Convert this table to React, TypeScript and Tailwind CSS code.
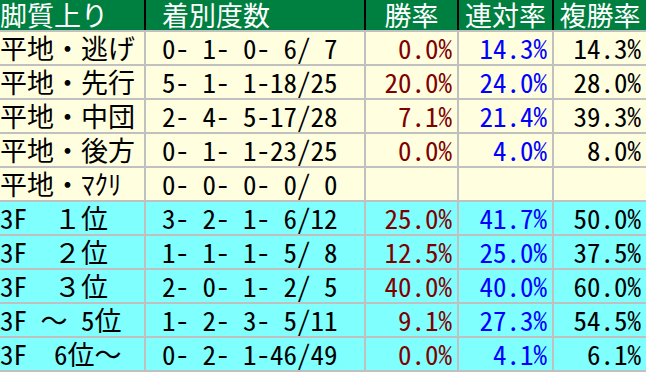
const font = {
  fontFamily: '"Noto Sans Mono CJK JP", "Noto Sans CJK JP", "Liberation Mono", monospace',
}

type Row = {
  label: string
  counts: string
  win: string
  rentai: string
  fukusho: string
  tone: "flat" | "f3"
}

const rows: Row[] = [
  { label: "平地・逃げ", counts: "0- 1- 0- 6/ 7", win: "0.0%", rentai: "14.3%", fukusho: "14.3%", tone: "flat" },
  { label: "平地・先行", counts: "5- 1- 1-18/25", win: "20.0%", rentai: "24.0%", fukusho: "28.0%", tone: "flat" },
  { label: "平地・中団", counts: "2- 4- 5-17/28", win: "7.1%", rentai: "21.4%", fukusho: "39.3%", tone: "flat" },
  { label: "平地・後方", counts: "0- 1- 1-23/25", win: "0.0%", rentai: "4.0%", fukusho: "8.0%", tone: "flat" },
  { label: "平地・ﾏｸﾘ", counts: "0- 0- 0- 0/ 0", win: "", rentai: "", fukusho: "", tone: "flat" },
  { label: "3F　１位", counts: "3- 2- 1- 6/12", win: "25.0%", rentai: "41.7%", fukusho: "50.0%", tone: "f3" },
  { label: "3F　２位", counts: "1- 1- 1- 5/ 8", win: "12.5%", rentai: "25.0%", fukusho: "37.5%", tone: "f3" },
  { label: "3F　３位", counts: "2- 0- 1- 2/ 5", win: "40.0%", rentai: "40.0%", fukusho: "60.0%", tone: "f3" },
  { label: "3F ～ 5位", counts: "1- 2- 3- 5/11", win: "9.1%", rentai: "27.3%", fukusho: "54.5%", tone: "f3" },
  { label: "3F  6位～", counts: "0- 2- 1-46/49", win: "0.0%", rentai: "4.1%", fukusho: "6.1%", tone: "f3" },
]

const cols = "grid grid-cols-[144px_218px_91px_93px_92px] gap-x-[2px]"

export default function App() {
  return (
    <div
      className="w-[646px] h-[372px] overflow-hidden bg-[#c0c0c0] text-[27px]"
      style={font}
    >
      {/* header */}
      <div className={`${cols} h-[30px] bg-black text-white leading-[30px]`}>
        <div className="bg-[#008040] whitespace-pre">脚質上り</div>
        <div className="bg-[#008040] pl-[16px]">着別度数</div>
        <div className="bg-[#008040] text-center">勝率</div>
        <div className="bg-[#008040] text-center">連対率</div>
        <div className="bg-[#008040] text-center">複勝率</div>
      </div>

      <div className="flex flex-col gap-y-[2px] pt-[2px]">
        {rows.map((r) => {
          const bg = r.tone === "flat" ? "bg-[#ffffe0]" : "bg-[#80ffff]"
          return (
            <div key={r.label} className={`${cols} h-[32px] leading-[32px]`}>
              <div className={`whitespace-pre text-black ${bg}`}>{r.label}</div>
              <div className={`whitespace-pre pl-[16px] text-black ${bg}`}>{r.counts}</div>
              <div className={`text-right pr-[5px] text-[#800000] ${bg}`}>{r.win}</div>
              <div className={`text-right pr-[5px] text-[#0000ff] ${bg}`}>{r.rentai}</div>
              <div className={`text-right pr-[5px] text-black ${bg}`}>{r.fukusho}</div>
            </div>
          )
        })}
      </div>
    </div>
  )
}
